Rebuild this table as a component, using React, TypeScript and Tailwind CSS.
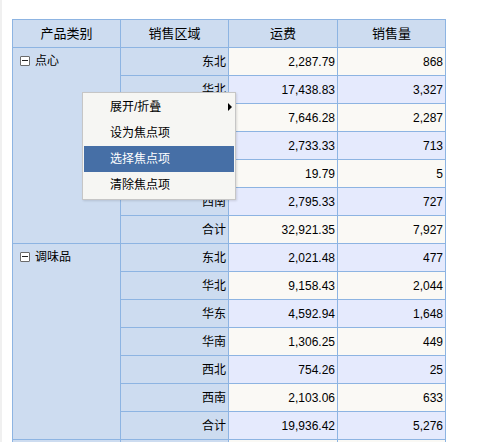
import React from "react";

type Row = { r: string; f: string; q: string };
const groups: { name: string; rows: Row[] }[] = [
  {
    name: "点心",
    rows: [
      { r: "东北", f: "2,287.79", q: "868" },
      { r: "华北", f: "17,438.83", q: "3,327" },
      { r: "华东", f: "7,646.28", q: "2,287" },
      { r: "华南", f: "2,733.33", q: "713" },
      { r: "西北", f: "19.79", q: "5" },
      { r: "西南", f: "2,795.33", q: "727" },
      { r: "合计", f: "32,921.35", q: "7,927" },
    ],
  },
  {
    name: "调味品",
    rows: [
      { r: "东北", f: "2,021.48", q: "477" },
      { r: "华北", f: "9,158.43", q: "2,044" },
      { r: "华东", f: "4,592.94", q: "1,648" },
      { r: "华南", f: "1,306.25", q: "449" },
      { r: "西北", f: "754.26", q: "25" },
      { r: "西南", f: "2,103.06", q: "633" },
      { r: "合计", f: "19,936.42", q: "5,276" },
    ],
  },
];

const font = { fontFamily: '"Liberation Sans", "Noto Sans CJK SC", sans-serif' };

function Minus() {
  return (
    <span className="inline-flex items-center justify-center w-[10px] h-[10px] border border-[#6b6b6b] bg-white rounded-[1px] mr-[5px] shrink-0">
      <span className="block w-[6px] h-px bg-[#222]" />
    </span>
  );
}

export default function App() {
  let idx = 0;
  return (
    <div className="relative w-[480px] h-[442px] overflow-hidden bg-white text-[12px] text-black" style={font}>
      <div className="absolute left-0 top-0 w-[2px] h-full bg-[#f0f0f0]" />
      <div className="pl-[12px] pt-[19px]">
        <table className="border-collapse table-fixed w-[433px]">
          <colgroup>
            <col className="w-[108px]" />
            <col className="w-[108px]" />
            <col className="w-[109px]" />
            <col className="w-[108px]" />
          </colgroup>
          <thead>
            <tr className="h-[28px] bg-[#cddcf0]">
              {["产品类别", "销售区域", "运费", "销售量"].map((h) => (
                <th key={h} className="border border-[#8db4e2] font-normal text-[13px] text-center p-0">
                  {h}
                </th>
              ))}
            </tr>
          </thead>
          <tbody>
            {groups.map((g) =>
              g.rows.map((row, i) => {
                const bg = idx++ % 2 === 0 ? "bg-[#faf9f5]" : "bg-[#e5eafd]";
                return (
                  <tr key={g.name + i} className="h-[28px]">
                    {i === 0 && (
                      <td rowSpan={g.rows.length} className="border border-[#8db4e2] bg-[#cddcf0] align-top p-0">
                        <div className="flex items-center pl-[7px] pt-[2px] h-[21px] box-content">
                          <Minus />
                          <span>{g.name}</span>
                        </div>
                      </td>
                    )}
                    <td className="border border-[#8db4e2] bg-[#cddcf0] text-right pr-[2px] p-0">{row.r}</td>
                    <td className={`border border-[#8db4e2] ${bg} text-right pr-[2px] p-0`}>{row.f}</td>
                    <td className={`border border-[#8db4e2] ${bg} text-right pr-[2px] p-0`}>{row.q}</td>
                  </tr>
                );
              })
            )}
            <tr className="h-[28px]">
              <td className="border border-[#8db4e2] bg-[#cddcf0] p-0" />
              <td className="border border-[#8db4e2] bg-[#cddcf0] p-0" />
              <td className="border border-[#8db4e2] bg-[#faf9f5] p-0" />
              <td className="border border-[#8db4e2] bg-[#faf9f5] p-0" />
            </tr>
          </tbody>
        </table>
      </div>

      <div className="absolute left-[82px] top-[92px] w-[154px] border border-[#c6c6c6] bg-[#f6f6f3] py-[1px] shadow-[1px_1px_2px_rgba(0,0,0,0.12)]">
        {["展开/折叠", "设为焦点项", "选择焦点项", "清除焦点项"].map((t, i) => (
          <div
            key={t}
            className={`relative h-[26px] flex items-center pl-[26px] mx-[1px] ${
              i === 2 ? "bg-[#466fa6] text-white" : ""
            }`}
          >
            {t}
            {i === 0 && (
              <span className="absolute right-[2px] top-[9px] w-0 h-0 border-y-[4px] border-y-transparent border-l-[4px] border-l-black" />
            )}
          </div>
        ))}
      </div>
    </div>
  );
}
